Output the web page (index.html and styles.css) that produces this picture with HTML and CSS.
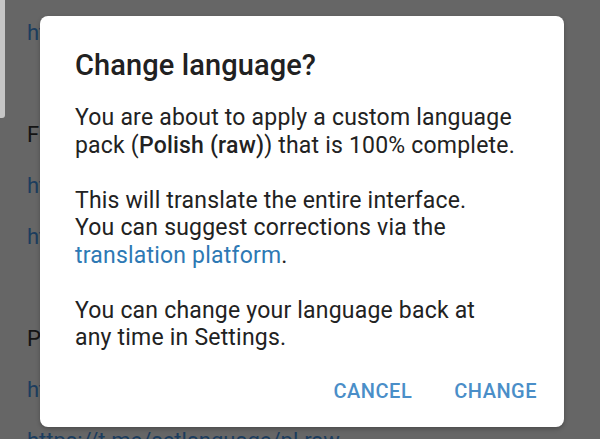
FILE: index.html
```html
<!DOCTYPE html>
<html>
<head>
<meta charset="utf-8">
<link rel="stylesheet" href="styles.css">
</head>
<body>
<div class="page">
  <div class="scrollbar"></div>
  <div class="bg-list">
    <div class="bg-row link">https://t.me/setlanguage/pl</div>
    <div class="bg-row"></div>
    <div class="bg-row plain">Français</div>
    <div class="bg-row link">https://t.me/setlanguage/fr</div>
    <div class="bg-row link">https://t.me/setlanguage/fr-raw</div>
    <div class="bg-row"></div>
    <div class="bg-row plain">Polski</div>
    <div class="bg-row link">https://t.me/setlanguage/pl</div>
    <div class="bg-row link">https://t.me/setlanguage/pl-raw</div>
  </div>
  <div class="dialog">
    <h1 class="title">Change language?</h1>
    <p class="body">You are about to apply a custom language<br>pack (<b>Polish (raw)</b>) that is 100% complete.<br><br>This will translate the entire interface.<br>You can suggest corrections via the<br><a class="link-text">translation platform</a>.<br><br>You can change your language back at<br>any time in Settings.</p>
    <div class="actions">
      <span class="btn">CANCEL</span>
      <span class="btn">CHANGE</span>
    </div>
  </div>
</div>
</body>
</html>
```

FILE: styles.css
```css
html, body {
  margin: 0;
  padding: 0;
}
body {
  width: 600px;
  height: 439px;
  overflow: hidden;
  background: #666666;
  font-family: Roboto, "Noto Sans", sans-serif;
}
.page {
  position: relative;
  width: 600px;
  height: 439px;
  overflow: hidden;
}
.scrollbar {
  position: absolute;
  left: 0;
  top: 0;
  width: 5px;
  height: 118px;
  background: #c6c6c6;
  border-radius: 0 0 3px 0;
}
.bg-list {
  display: flex;
  flex-direction: column;
  padding: 0 0 0 27px;
  margin-top: 7px;
}
.bg-row {
  height: 51px;
  font-size: 22px;
  line-height: 51px;
  white-space: nowrap;
}
.bg-row.link {
  color: #1c3d5e;
}
.bg-row.plain {
  color: #141414;
}
.dialog {
  position: absolute;
  left: 40px;
  top: 16px;
  width: 524px;
  height: 411px;
  box-sizing: border-box;
  background: #ffffff;
  border-radius: 8px;
  box-shadow: 0 2px 4px rgba(0,0,0,0.25);
  padding: 32px 20px 0 35px;
  display: flex;
  flex-direction: column;
}
.title {
  margin: 0;
  font-size: 29px;
  font-weight: 500;
  line-height: 34px;
  color: #212121;
  letter-spacing: 0.1px;
}
.body {
  margin: 22px 0 0 0;
  font-size: 23px;
  line-height: 27.5px;
  color: #222222;
  letter-spacing: 0.2px;
  white-space: nowrap;
}
.body b {
  font-weight: 500;
}
.link-text {
  color: #2e79b4;
}
.actions {
  margin-top: auto;
  display: flex;
  justify-content: flex-end;
  gap: 42px;
  padding: 0 7px 26px 0;
}
.btn {
  font-size: 20px;
  font-weight: 500;
  color: #4a8ec8;
  letter-spacing: 0.5px;
  line-height: 20px;
}
```
